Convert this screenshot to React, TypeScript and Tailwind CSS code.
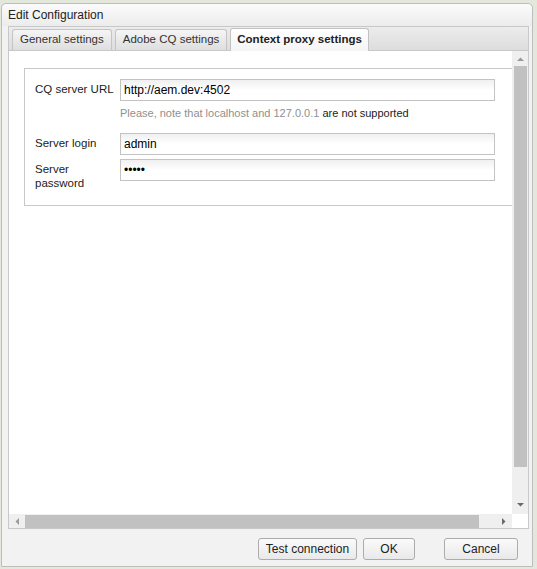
import React from 'react';

const font = { fontFamily: '"Liberation Sans", Arial, sans-serif' };

function Tab({ label, active }: { label: string; active?: boolean }) {
  return (
    <div
      className={
        'flex items-center border border-b-0 rounded-t-[3px] text-[11.5px] ' +
        (active
          ? 'h-[23px] -mb-px px-[6px] bg-gradient-to-b from-white to-[#f4f4f4] border-[#c2c2c2] font-bold text-[#222]'
          : 'h-[21px] px-[7px] bg-gradient-to-b from-[#f5f5f5] to-[#dedede] border-[#c4c4c4] text-[#333]')
      }
    >
      {label}
    </div>
  );
}

function Field({ value, type = 'text' }: { value: string; type?: string }) {
  return (
    <input
      readOnly
      type={type}
      value={value}
      className="w-[375px] h-[22px] border border-[#c3c3c3] bg-gradient-to-b from-[#f0f0f0] via-white to-white px-[3px] text-[12px] text-black outline-none"
      style={font}
    />
  );
}

function Button({ children, w }: { children: React.ReactNode; w: string }) {
  return (
    <button
      className={
        w +
        ' h-[22px] border border-[#acacac] rounded-[3px] bg-gradient-to-b from-[#fafafa] to-[#e9e9e9] text-[12px] text-[#222] flex items-center justify-center'
      }
    >
      {children}
    </button>
  );
}

export default function App() {
  return (
    <div className="w-[537px] h-[569px] bg-[#e4e7dc] overflow-hidden" style={font}>
      <div className="ml-px mt-[3px] w-[532px] h-[564px] border border-[#bdbdbd] rounded-t-[5px] bg-[#f2f2f2] flex flex-col">
        {/* title bar */}
        <div className="h-[22px] shrink-0 flex items-center pl-[6px] rounded-t-[5px] bg-gradient-to-b from-[#fbfbfb] to-[#ececec] text-[12px] text-[#222]">
          Edit Configuration
        </div>

        {/* tab panel */}
        <div className="ml-[6px] mr-[3px] h-[503px] shrink-0 border border-[#c8c8c8] flex flex-col bg-white">
          <div className="h-[24px] shrink-0 bg-gradient-to-b from-[#ececec] to-[#dddddd] flex items-end gap-[3px] pl-[3px] border-b border-[#c8c8c8]">
            <Tab label="General settings" />
            <Tab label="Adobe CQ settings" />
            <Tab label="Context proxy settings" active />
          </div>

          <div className="flex-1 flex min-h-0">
            <div className="flex-1 overflow-hidden pt-[17px] pl-[15px]">
              <div className="w-[500px] h-[138px] border border-[#c8c8c8] pt-[10px] pl-[10px]">
                <div className="flex items-center">
                  <div className="w-[85px] text-[11.5px] text-[#222]">CQ server URL</div>
                  <Field value="http://aem.dev:4502" />
                </div>
                <div className="ml-[85px] mt-[4px] text-[11px] text-[#8f8f8f]">
                  Please, note that localhost and 127.0.0.1{' '}
                  <span className="text-[#222]">are not supported</span>
                </div>
                <div className="flex items-center mt-[11px]">
                  <div className="w-[85px] text-[11.5px] text-[#222]">Server login</div>
                  <Field value="admin" />
                </div>
                <div className="flex items-start mt-[4px]">
                  <div className="w-[85px] text-[11.5px] leading-[14px] text-[#222] pt-[3px]">
                    Server
                    <br />
                    password
                  </div>
                  <Field value="admin" type="password" />
                </div>
              </div>
            </div>

            {/* vertical scrollbar */}
            <div className="w-[16px] shrink-0 bg-[#efefef] flex flex-col items-center">
              <svg width="9" height="9" viewBox="0 0 9 9" className="mt-[4px]">
                <path d="M1 6 L4.5 2.5 L8 6 Z" fill="#9a9a9a" />
              </svg>
              <div className="w-[13px] flex-1 bg-[#c1c1c1] mt-[2px] mb-[33px]" />
              <svg width="9" height="9" viewBox="0 0 9 9" className="mb-[5px]">
                <path d="M1 3 L4.5 6.5 L8 3 Z" fill="#6a6a6a" />
              </svg>
            </div>
          </div>

          {/* horizontal scrollbar */}
          <div className="h-[14px] shrink-0 flex">
            <div className="flex-1 bg-[#efefef] flex items-center">
              <svg width="9" height="9" viewBox="0 0 9 9" className="ml-[4px]">
                <path d="M6 1 L2.5 4.5 L6 8 Z" fill="#9a9a9a" />
              </svg>
              <div className="h-[13px] flex-1 bg-[#c1c1c1] ml-[3px] mr-[20px]" />
              <svg width="9" height="9" viewBox="0 0 9 9" className="mr-[4px]">
                <path d="M3 1 L6.5 4.5 L3 8 Z" fill="#6a6a6a" />
              </svg>
            </div>
            <div className="w-[16px] bg-white" />
          </div>
        </div>

        {/* footer buttons */}
        <div className="flex justify-end gap-[6px] pr-[14px] pt-[9px]">
          <Button w="w-[99px]">Test connection</Button>
          <Button w="w-[52px] mr-[23px]">OK</Button>
          <Button w="w-[74px]">Cancel</Button>
        </div>
      </div>
    </div>
  );
}
